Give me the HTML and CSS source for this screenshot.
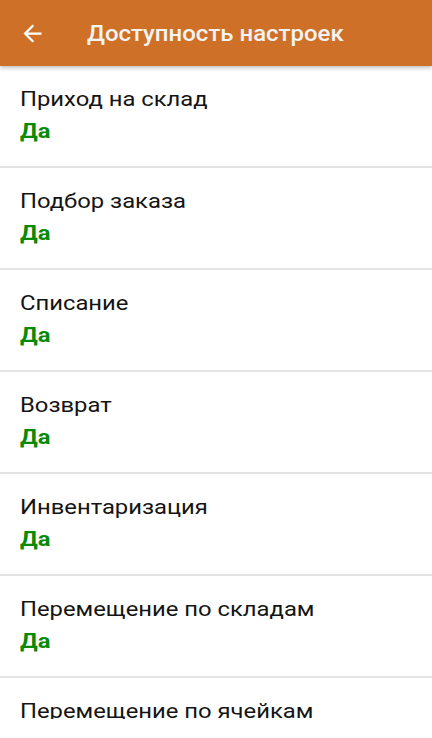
FILE: index.html
```html
<!DOCTYPE html>
<html lang="ru">
<head>
    <meta charset="UTF-8">
    <meta name="viewport" content="width=device-width, initial-scale=1.0">
    <title>Доступность настроек</title>
    <link rel="stylesheet" href="styles.css">
</head>
<body>
    <!-- Верхняя панель -->
    <header class="toolbar">
        <svg class="back" width="27" height="27" viewBox="0 0 24 24">
            <path d="M20 11H7.83l5.59-5.59L12 4l-8 8 8 8 1.41-1.41L7.83 13H20v-2z" fill="#fff"/>
        </svg>
        <h1>Доступность настроек</h1>
    </header>

    <div class="list">
        <div class="item">
            <div class="name">Приход на склад</div>
            <div class="value">Да</div>
        </div>
        <div class="item">
            <div class="name">Подбор заказа</div>
            <div class="value">Да</div>
        </div>
        <div class="item">
            <div class="name">Списание</div>
            <div class="value">Да</div>
        </div>
        <div class="item">
            <div class="name">Возврат</div>
            <div class="value">Да</div>
        </div>
        <div class="item">
            <div class="name">Инвентаризация</div>
            <div class="value">Да</div>
        </div>
        <div class="item">
            <div class="name">Перемещение по складам</div>
            <div class="value">Да</div>
        </div>
        <div class="item">
            <div class="name">Перемещение по ячейкам</div>
            <div class="value">Да</div>
        </div>
    </div>
</body>
</html>
```

FILE: styles.css
```css
body {
    margin: 0;
    font-family: Roboto, "Noto Sans", sans-serif;
    background: #fff;
    color: #141414;
    height: 100vh;
    overflow: hidden;
}

.toolbar {
    height: 66px;
    background-color: #cf7028;
    display: flex;
    align-items: center;
    padding-left: 19px;
    box-shadow: 0 2px 4px rgba(0, 0, 0, 0.25);
    position: relative;
    z-index: 1;
}

.back {
    width: 27px;
    height: 27px;
}

/* текст в оригинале шире обычного Roboto */
h1 {
    margin: 0 0 0 41px;
    font-size: 22px;
    font-weight: 500;
    color: #f4f4f4;
    transform: scaleX(1.09);
    transform-origin: left center;
}

.list {
    height: 653px;
    overflow: hidden;
}

.item {
    padding: 17px 20px 19px;
    border-bottom: 2px solid #e3e3e3;
}

.name,
.value {
    width: fit-content;
    font-size: 20px;
    line-height: 32px;
    transform: scaleX(1.19);
    transform-origin: left center;
}

.value {
    font-weight: 700;
    color: #078a07;
}
```
